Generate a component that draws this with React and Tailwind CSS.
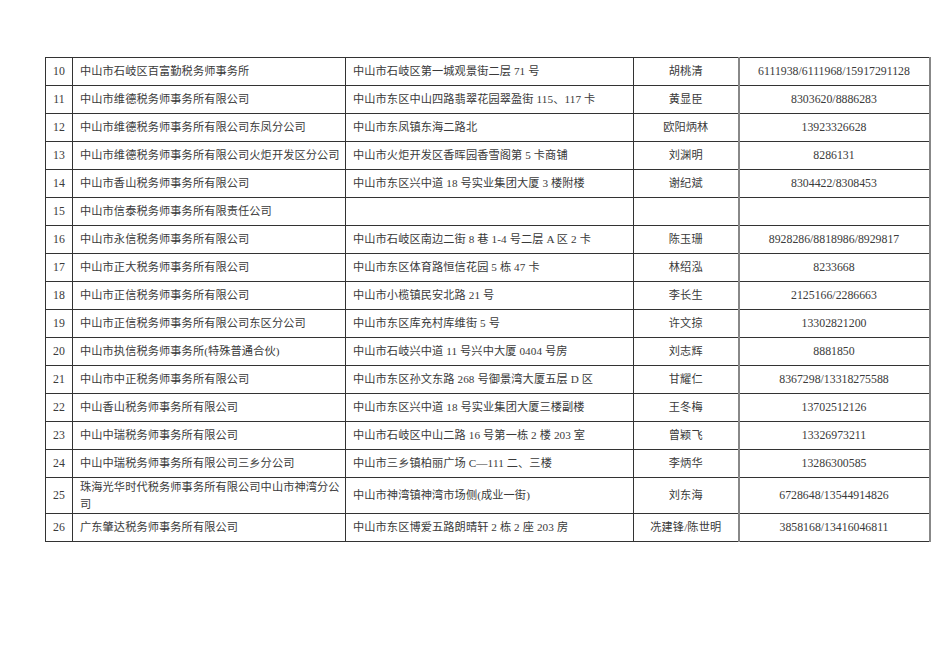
import React from 'react';

const rows = [
    ['10', '中山市石岐区百富勤税务师事务所', '中山市石岐区第一城观景街二层 71 号', '胡桃清', '6111938/6111968/15917291128'],
    ['11', '中山市维德税务师事务所有限公司', '中山市东区中山四路翡翠花园翠盈街 115、117 卡', '黄显臣', '8303620/8886283'],
    ['12', '中山市维德税务师事务所有限公司东凤分公司', '中山市东凤镇东海二路北', '欧阳炳林', '13923326628'],
    ['13', '中山市维德税务师事务所有限公司火炬开发区分公司', '中山市火炬开发区香晖园香雪阁第 5 卡商铺', '刘渊明', '8286131'],
    ['14', '中山市香山税务师事务所有限公司', '中山市东区兴中道 18 号实业集团大厦 3 楼附楼', '谢纪斌', '8304422/8308453'],
    ['15', '中山市信泰税务师事务所有限责任公司', '', '', ''],
    ['16', '中山市永信税务师事务所有限公司', '中山市石岐区南边二街 8 巷 1-4 号二层 A 区 2 卡', '陈玉珊', '8928286/8818986/8929817'],
    ['17', '中山市正大税务师事务所有限公司', '中山市东区体育路恒信花园 5 栋 47 卡', '林绍泓', '8233668'],
    ['18', '中山市正信税务师事务所有限公司', '中山市小榄镇民安北路 21 号', '李长生', '2125166/2286663'],
    ['19', '中山市正信税务师事务所有限公司东区分公司', '中山市东区库充村库维街 5 号', '许文掠', '13302821200'],
    ['20', '中山市执信税务师事务所(特殊普通合伙)', '中山市石岐兴中道 11 号兴中大厦 0404 号房', '刘志辉', '8881850'],
    ['21', '中山市中正税务师事务所有限公司', '中山市东区孙文东路 268 号御景湾大厦五层 D 区', '甘耀仁', '8367298/13318275588'],
    ['22', '中山香山税务师事务所有限公司', '中山市东区兴中道 18 号实业集团大厦三楼副楼', '王冬梅', '13702512126'],
    ['23', '中山中瑞税务师事务所有限公司', '中山市石岐区中山二路 16 号第一栋 2 楼 203 室', '曾颖飞', '13326973211'],
    ['24', '中山中瑞税务师事务所有限公司三乡分公司', '中山市三乡镇柏丽广场 C—111 二、三楼', '李炳华', '13286300585'],
    ['25', ['珠海光华时代税务师事务所有限公司中山市神湾分公', '司'], '中山市神湾镇神湾市场侧(成业一街)', '刘东海', '6728648/13544914826'],
    ['26', '广东肇达税务师事务所有限公司', '中山市东区博爱五路朗晴轩 2 栋 2 座 203 房', '冼建锋/陈世明', '3858168/13416046811'],
];

const App = () => {
    return (
        <div
            className="w-[950px] h-[672px] bg-white text-[#3a3a3a] text-[11.2px]"
            style={{ fontFamily: '"Liberation Serif", "Noto Sans CJK SC", serif' }}
        >
            <div className="pt-[57px] pl-[45px]">
                <table className="border-collapse table-fixed w-[884px]">
                    <colgroup>
                        <col className="w-[27px]" />
                        <col className="w-[273px]" />
                        <col className="w-[288px]" />
                        <col className="w-[105px]" />
                        <col className="w-[191px]" />
                    </colgroup>
                    <tbody>
                        {rows.map((r) => (
                            <tr key={r[0]} className={r[0] === '25' ? 'h-[36px]' : 'h-[28px]'}>
                                <td className="border border-[#333] text-center align-middle p-0 text-[11.8px]">{r[0]}</td>
                                <td className="border border-[#333] px-[7px] py-0 align-middle leading-[17px] whitespace-nowrap tracking-[0.1px]">
                                    {Array.isArray(r[1]) ? (
                                        <>
                                            {r[1][0]}
                                            <br />
                                            {r[1][1]}
                                        </>
                                    ) : (
                                        r[1]
                                    )}
                                </td>
                                <td className="border border-[#333] px-[7px] py-0 align-middle whitespace-nowrap tracking-[0.1px]">{r[2]}</td>
                                <td className="border border-[#333] border-r-[#888] border-r-2 text-center align-middle p-0 tracking-[0.1px]">{r[3]}</td>
                                <td className="border border-[#333] border-r-[#888] border-r-2 text-center align-middle p-0 text-[11.8px]">{r[4]}</td>
                            </tr>
                        ))}
                    </tbody>
                </table>
            </div>
        </div>
    );
};

export default App;
